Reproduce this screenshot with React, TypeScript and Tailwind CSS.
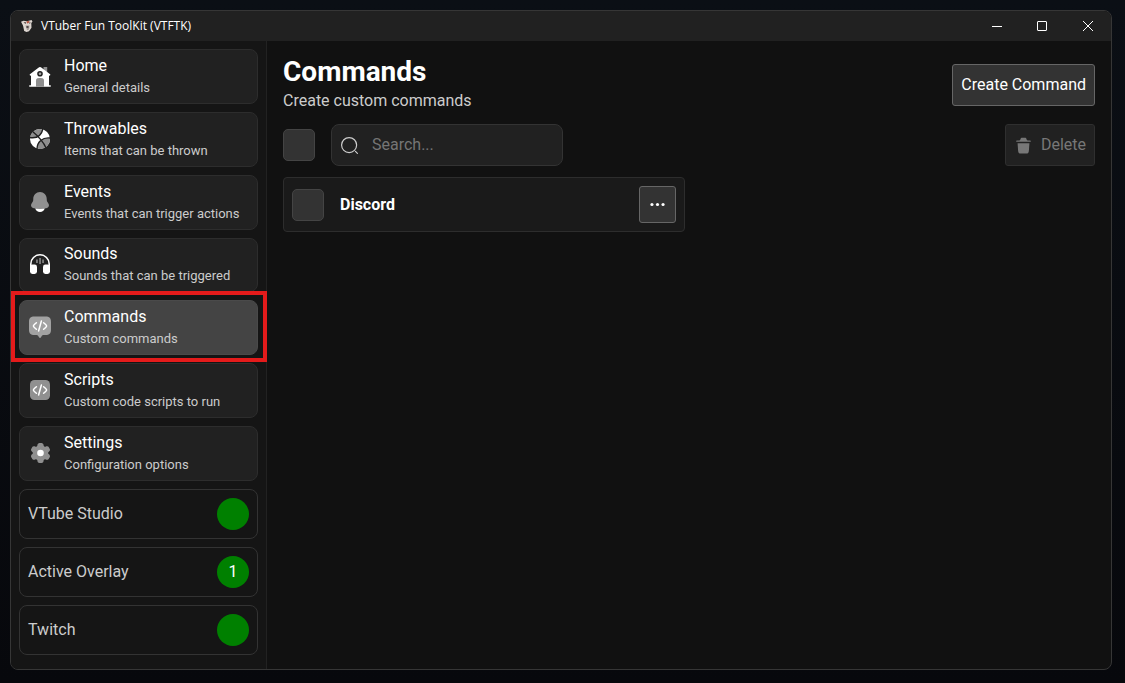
import type { ReactNode } from "react";

function Icon({ children, className = "size-6 shrink-0" }: { children: ReactNode; className?: string }) {
  return (
    <svg viewBox="0 0 24 24" className={className} fill="currentColor" aria-hidden="true">
      {children}
    </svg>
  );
}

const HomeIcon = () => (
  <Icon>
    <path d="M15.5 3h3.700v6l-3.700-3z" opacity=".5" />
    <path
      fillRule="evenodd"
      d="M10.400 3.700a2.600 2.600 0 0 1 3.200 0l8.500 6.500a.9.9 0 0 1-1.100 1.400v9.700h1.200a.75.75 0 0 1 0 1.500H1.800a.75.75 0 0 1 0-1.500H3v-9.700a.9.9 0 0 1-1.100-1.400zM12 7a2.800 2.800 0 1 0 0 5.600a2.800 2.800 0 0 0 0-5.600"
    />
    <circle cx="12" cy="9.800" r="1.300" opacity=".6" />
    <path d="M8 22.800v-5.500c0-2.600.8-3.200 4-3.200s4 .6 4 3.200v5.500z" fill="#8e8e8e" />
  </Icon>
);

const BallIcon = () => (
  <Icon>
    <circle cx="12" cy="12" r="10" />
    <path
      d="M14.900 2.420C13.500 8.500 8.500 11.500 2.100 10.500A10 10 0 0 1 14.900 2.420M9 21.540C9 15 14.500 10.200 21.950 11A10 10 0 0 1 9 21.540"
      fill="#8e8e8e"
    />
    <g fill="none" stroke="#212121" strokeWidth="1.400">
      <path d="M4.600 4.500C10.500 9.500 15.500 15 17.900 20.800M14.900 1.800C13.500 8.500 8.500 11.500 1.800 10.500M9 22.200c0-7.200 5.500-12.200 13.300-11.200" />
    </g>
  </Icon>
);

const BellIcon = () => (
  <Icon>
    <path
      d="M18.750 9v.704c0 .845.24 1.671.692 2.374l1.108 1.723c1.011 1.574.239 3.713-1.520 4.210a25.794 25.794 0 0 1-14.060 0c-1.759-.497-2.531-2.636-1.520-4.210l1.108-1.723A4.393 4.393 0 0 0 5.250 9.704V9c0-3.866 3.022-7 6.750-7s6.750 3.134 6.750 7"
      opacity=".5"
    />
    <path d="M7.243 18.545a5.002 5.002 0 0 0 9.513 0c-3.145.59-6.367.59-9.513 0" />
  </Icon>
);

const HeadphonesIcon = () => (
  <Icon>
    <path d="M2 19V12a10 10 0 0 1 20 0v7h-1.600V12a8.400 8.400 0 0 0-16.800 0v7z" />
    <rect x="2" y="12.500" width="7" height="9.500" rx="2.400" />
    <rect x="15" y="12.500" width="7" height="9.500" rx="2.400" />
    <path d="M11.300 6h1.500v6h-1.500zM8.200 7.500h1.500v3.500H8.200zM14.300 7.500h1.500v3.500h-1.500z" opacity=".5" />
  </Icon>
);

const CodeGlyph = () => (
  <path
    d="M8.400 8.700 6.600 10.300c-1.600 1.400-1.600 2 0 3.400l1.800 1.600M15.600 8.700l1.800 1.600c1.600 1.400 1.600 2 0 3.400l-1.800 1.600M13.400 7l-2.800 10"
    fill="none"
    stroke="currentColor"
    strokeWidth="1.500"
    strokeLinecap="round"
  />
);

const CommandIcon = () => (
  <Icon>
    <path
      d="M6.500 1.500h11C21.500 1.500 23 3 23 7v7.500c0 4-1.500 5.500-5.500 5.500h-2.200c-.7 0-1 .2-1.400.8l-.9 1.500c-.5.800-1.500.8-2 0l-.9-1.500c-.4-.6-.7-.8-1.400-.8H6.500C2.500 20 1 18.500 1 14.500V7c0-4 1.500-5.500 5.500-5.500"
      opacity=".5"
    />
    <g transform="translate(0 -1)">
      <CodeGlyph />
    </g>
  </Icon>
);

const ScriptIcon = () => (
  <Icon>
    <rect x="2" y="2" width="20" height="20" rx="4.500" opacity=".5" />
    <CodeGlyph />
  </Icon>
);

const GearIcon = () => (
  <Icon>
    <path
      d="M14.279 2.152C13.909 2 13.439 2 12.500 2s-1.408 0-1.779.152a2.008 2.008 0 0 0-1.090 1.083c-.094.223-.13.484-.145.863a1.615 1.615 0 0 1-.796 1.353a1.640 1.640 0 0 1-1.579.008c-.338-.178-.583-.276-.825-.308a2.026 2.026 0 0 0-1.490.396c-.318.242-.553.646-1.022 1.453c-.47.807-.704 1.210-.757 1.605c-.07.526.074 1.058.4 1.479c.148.192.357.353.68.555c.477.297.783.803.783 1.361c0 .558-.306 1.064-.782 1.360c-.324.203-.533.364-.682.556a1.990 1.990 0 0 0-.399 1.479c.053.394.287.798.757 1.605c.47.807.704 1.210 1.022 1.453c.424.323.96.465 1.490.396c.242-.032.487-.13.825-.308a1.640 1.640 0 0 1 1.580.008c.486.28.774.795.795 1.353c.015.38.051.64.145.863c.204.49.596.88 1.090 1.083c.37.152.84.152 1.779.152s1.409 0 1.779-.152a2.008 2.008 0 0 0 1.090-1.083c.094-.223.13-.483.145-.863c.02-.558.309-1.074.796-1.353a1.640 1.640 0 0 1 1.579-.008c.338.178.583.276.825.308c.53.07 1.066-.073 1.490-.396c.318-.242.553-.646 1.022-1.453c.47-.807.704-1.210.757-1.605a1.990 1.990 0 0 0-.4-1.479c-.148-.192-.357-.353-.68-.555c-.477-.297-.783-.803-.783-1.361c0-.558.306-1.064.782-1.360c.324-.203.533-.364.682-.556a1.990 1.990 0 0 0 .399-1.479c-.053-.394-.287-.798-.757-1.605c-.47-.807-.704-1.210-1.022-1.453a2.026 2.026 0 0 0-1.490-.396c-.242.032-.487.13-.825.308a1.640 1.640 0 0 1-1.580-.008a1.615 1.615 0 0 1-.795-1.353c-.015-.38-.051-.64-.145-.863a2.007 2.007 0 0 0-1.090-1.083"
      opacity=".5"
    />
    <circle cx="12.500" cy="12" r="3.300" />
  </Icon>
);

const Logo = () => (
  <svg viewBox="0 0 12 12" className="size-3" aria-hidden="true">
    <path d="M0 1.800 2.500.8 6 1.200 10.500 0l1 1.500-1.200 1.500.2 4.700L8 11.200 5.500 12 3.200 11 2 5.500z" fill="#ddd6d0" />
    <path d="M2.500 2.200h2.700L4.500 4zM8 2.500h1.800L8.700 4z" fill="#4a3c3a" />
    <path d="M5.500 1.200 8.500 1l-.8 2-1.700.5z" fill="#b5533f" />
    <path d="M4.500 5.500h4l-.5 4-2 .8z" fill="#a39a94" />
    <path d="M5.500 6h2v2h-2z" fill="#51484a" />
  </svg>
);

const navItems = [
  { title: "Home", text: "General details", icon: <HomeIcon /> },
  { title: "Throwables", text: "Items that can be thrown", icon: <BallIcon /> },
  { title: "Events", text: "Events that can trigger actions", icon: <BellIcon /> },
  { title: "Sounds", text: "Sounds that can be triggered", icon: <HeadphonesIcon /> },
  { title: "Commands", text: "Custom commands", icon: <CommandIcon />, active: true },
  { title: "Scripts", text: "Custom code scripts to run", icon: <ScriptIcon /> },
  { title: "Settings", text: "Configuration options", icon: <GearIcon /> },
];

const statuses = [
  { label: "VTube Studio", value: "" },
  { label: "Active Overlay", value: "1" },
  { label: "Twitch", value: "" },
];

function TitleBar() {
  return (
    <header className="flex h-[30px] shrink-0 items-center bg-[#212121] pl-[10px] font-['Open_Sans',sans-serif]">
      <Logo />
      <span className="ml-2 flex-1 text-xs text-white">VTuber Fun ToolKit (VTFTK)</span>
      <div className="flex h-full text-white">
        <button aria-label="Minimize" className="grid w-11 place-items-center">
          <svg viewBox="0 0 10 10" className="size-[10px]"><path d="M0 5.500h10" stroke="currentColor" /></svg>
        </button>
        <button aria-label="Maximize" className="grid w-[46px] place-items-center">
          <svg viewBox="0 0 10 10" className="size-[10px]"><rect x=".5" y=".5" width="9" height="9" rx=".5" fill="none" stroke="currentColor" /></svg>
        </button>
        <button aria-label="Close" className="grid w-[46px] place-items-center">
          <svg viewBox="0 0 10 10" className="size-[10px]"><path d="m0 0 10 10M10 0 0 10" stroke="currentColor" /></svg>
        </button>
      </div>
    </header>
  );
}

function Sidebar() {
  return (
    <aside className="flex w-64 shrink-0 flex-col gap-2 border-r border-[#222] bg-[#151515] p-2">
      <nav className="grid h-[432px] grid-rows-7 gap-2">
        {navItems.map((item) => (
          <a
            key={item.title}
            href="#"
            aria-current={item.active ? "page" : undefined}
            className={
              item.active
                ? "relative z-10 flex items-center gap-3 rounded-lg border border-[#4a4a4a] bg-[#444] px-2 pb-px text-white"
                : "flex items-center gap-3 rounded-lg border border-[#2d2d2d] bg-[#212121] px-2 pb-px text-white"
            }
          >
            {item.icon}
            <span className="flex flex-col gap-1">
              <span className="text-base leading-5">{item.title}</span>
              <span className="text-[13px] leading-4 text-[#ccc]">{item.text}</span>
            </span>
            {item.active && (
              <span className="pointer-events-none absolute -top-[10px] -right-[10px] -bottom-2 -left-[9px] border-4 border-[#e41b1b]" />
            )}
          </a>
        ))}
      </nav>
      {statuses.map((s) => (
        <div key={s.label} className="flex h-[50px] items-center justify-between rounded-lg border border-[#333] px-2 text-base text-[#ccc]">
          {s.label}
          <span className="grid size-8 place-items-center rounded-full bg-[#008000] text-white">{s.value}</span>
        </div>
      ))}
    </aside>
  );
}

const checkboxClass = "size-8 shrink-0 appearance-none rounded-[5px] border border-[#444] bg-[#333] checked:bg-[#777]";

function Commands() {
  return (
    <main className="flex min-w-0 flex-1 flex-col gap-[11px] p-4">
      <div className="flex h-14 items-center justify-between">
        <div className="flex h-full flex-col gap-1">
          <h1 className="text-[28px] leading-[30px] font-bold text-white">Commands</h1>
          <p className="text-base leading-5 text-[#ccc]">Create custom commands</p>
        </div>
        <button className="h-[42px] rounded-[3px] border border-[#666] bg-[#333] px-2 text-base text-white">Create Command</button>
      </div>
      <div className="flex items-center">
        <input type="checkbox" aria-label="Select all" className={checkboxClass} />
        <label className="ml-4 flex h-[42px] w-[232px] items-center gap-[13px] rounded-lg border border-[#333] bg-[#212121] px-2 text-[#ccc]">
          <Icon className="size-[19px] shrink-0">
            <g fill="none" stroke="currentColor" strokeWidth="1.500" strokeLinecap="round">
              <circle cx="11.500" cy="11.500" r="9.500" />
              <path d="M19.500 19.500 22 22" />
            </g>
          </Icon>
          <input
            type="text"
            aria-label="Search"
            placeholder="Search..."
            className="min-w-0 flex-1 bg-transparent text-base text-white outline-none placeholder:text-[#757575]"
          />
        </label>
        <button disabled className="ml-auto flex h-[42px] items-center gap-2 rounded-[3px] border border-[#2f2f2f] bg-[#212121] px-2 text-base text-[#777]">
          <Icon className="size-[19px]">
            <path d="M2.700 6.500c0-.5.4-.9.9-.9h3c.6 0 1.100-.4 1.300-1l.3-.8c.3-.9 1-1.500 1.900-1.500h3.800c.9 0 1.600.6 1.900 1.500l.3.800c.2.600.7 1 1.300 1h3c.5 0 .9.4.9.9s-.4.900-.9.900H3.600a.9.900 0 0 1-.9-.9M4.500 9h15l-.7 9.500c-.2 2.700-1 3.500-3.600 3.500H8.800c-2.600 0-3.400-.8-3.600-3.500z" />
          </Icon>
          Delete
        </button>
      </div>
      <div className="flex h-[55px] w-[402px] items-center rounded border border-[#2d2d2d] bg-[#1a1a1a] px-2">
        <input type="checkbox" aria-label="Select Discord" className={checkboxClass} />
        <span className="ml-4 flex-1 text-base font-bold text-white">Discord</span>
        <button aria-label="More actions" className="grid size-[37px] place-items-center rounded-[3px] border border-[#666] bg-[#333] text-white">
          <Icon className="size-[19px]">
            <circle cx="5" cy="12" r="2" />
            <circle cx="12" cy="12" r="2" />
            <circle cx="19" cy="12" r="2" />
          </Icon>
        </button>
      </div>
    </main>
  );
}

export default function App() {
  return (
    <div className="flex min-h-screen bg-linear-to-b from-[#0b0f15] to-[#07080c] pt-[10px] pr-[13px] pb-[13px] pl-[10px] font-[Roboto,sans-serif]">
      <div className="flex min-w-0 flex-1 flex-col overflow-hidden rounded-lg border border-[#363636] bg-[#111]">
        <TitleBar />
        <div className="flex flex-1">
          <Sidebar />
          <Commands />
        </div>
      </div>
    </div>
  );
}
